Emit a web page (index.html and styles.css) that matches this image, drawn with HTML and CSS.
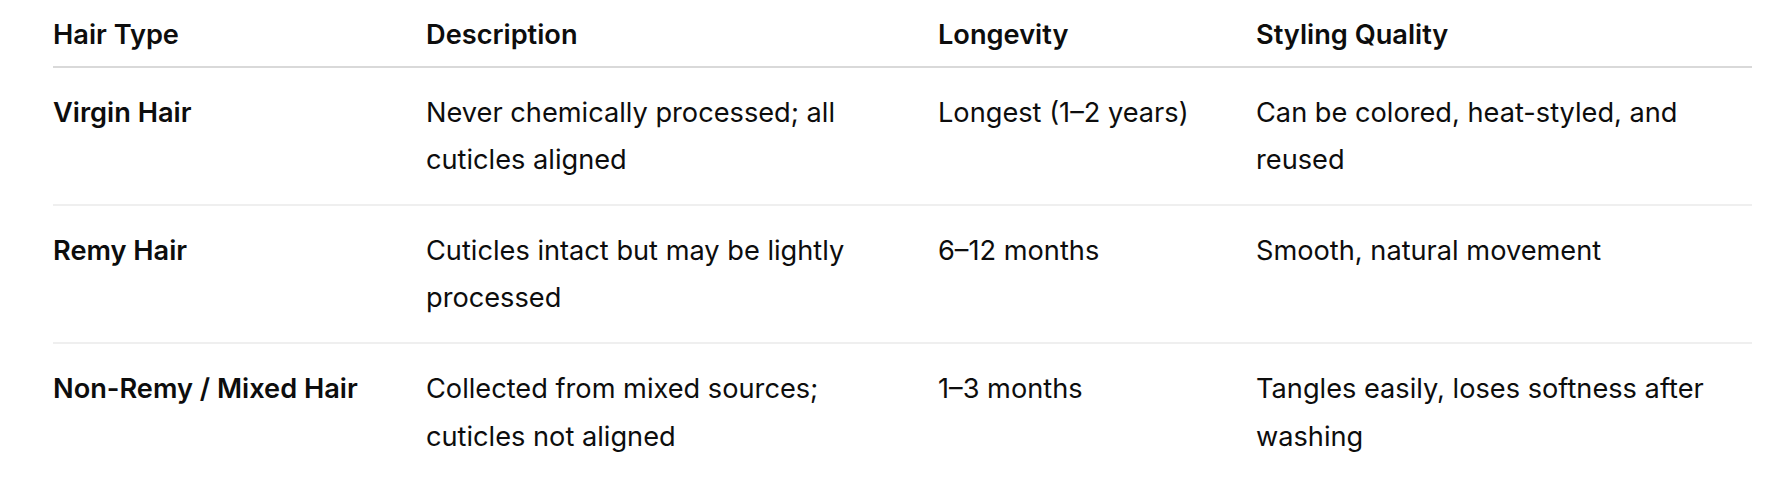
FILE: index.html
```html
<!DOCTYPE html>
<html lang="en">
<head>
<meta charset="utf-8">
<title>Hair Types</title>
<link rel="stylesheet" href="styles.css">
</head>
<body>
<div class="wrap">
  <table class="hair-table">
    <colgroup>
      <col class="c1"><col class="c2"><col class="c3"><col class="c4">
    </colgroup>
    <thead>
      <tr>
        <th>Hair Type</th>
        <th>Description</th>
        <th>Longevity</th>
        <th>Styling Quality</th>
      </tr>
    </thead>
    <tbody>
      <tr>
        <td class="name">Virgin Hair</td>
        <td>Never chemically processed; all cuticles aligned</td>
        <td>Longest (1–2 years)</td>
        <td>Can be colored, heat-styled, and reused</td>
      </tr>
      <tr>
        <td class="name">Remy Hair</td>
        <td>Cuticles intact but may be lightly processed</td>
        <td>6–12 months</td>
        <td>Smooth, natural movement</td>
      </tr>
      <tr class="last">
        <td class="name">Non-Remy / Mixed Hair</td>
        <td>Collected from mixed sources; cuticles not aligned</td>
        <td>1–3 months</td>
        <td>Tangles easily, loses softness after washing</td>
      </tr>
    </tbody>
  </table>
</div>
</body>
</html>
```

FILE: styles.css
```css
html, body {
  margin: 0;
  padding: 0;
  background: #ffffff;
}

body {
  font-family: Inter, "Noto Sans", "Liberation Sans", sans-serif;
  color: #0d0d0d;
  font-size: 27.2px;
  line-height: 47.6px;
}

.wrap {
  padding: 11px 32px 0 53px;
}

.hair-table {
  width: 1699px;
  border-collapse: collapse;
  table-layout: fixed;
}

.c1 { width: 373px; }
.c2 { width: 512px; }
.c3 { width: 318px; }
.c4 { width: 496px; }

.hair-table th {
  text-align: left;
  font-weight: 600;
  padding: 0 24px 7px 0;
  border-bottom: 2px solid #d9d9d9;
  vertical-align: bottom;
}

.hair-table td {
  text-align: left;
  vertical-align: top;
  padding: 21px 24px 20px 0;
  border-bottom: 2px solid #efefef;
}

.hair-table tr.last td {
  border-bottom: none;
}

.hair-table td.name {
  font-weight: 600;
}
```
